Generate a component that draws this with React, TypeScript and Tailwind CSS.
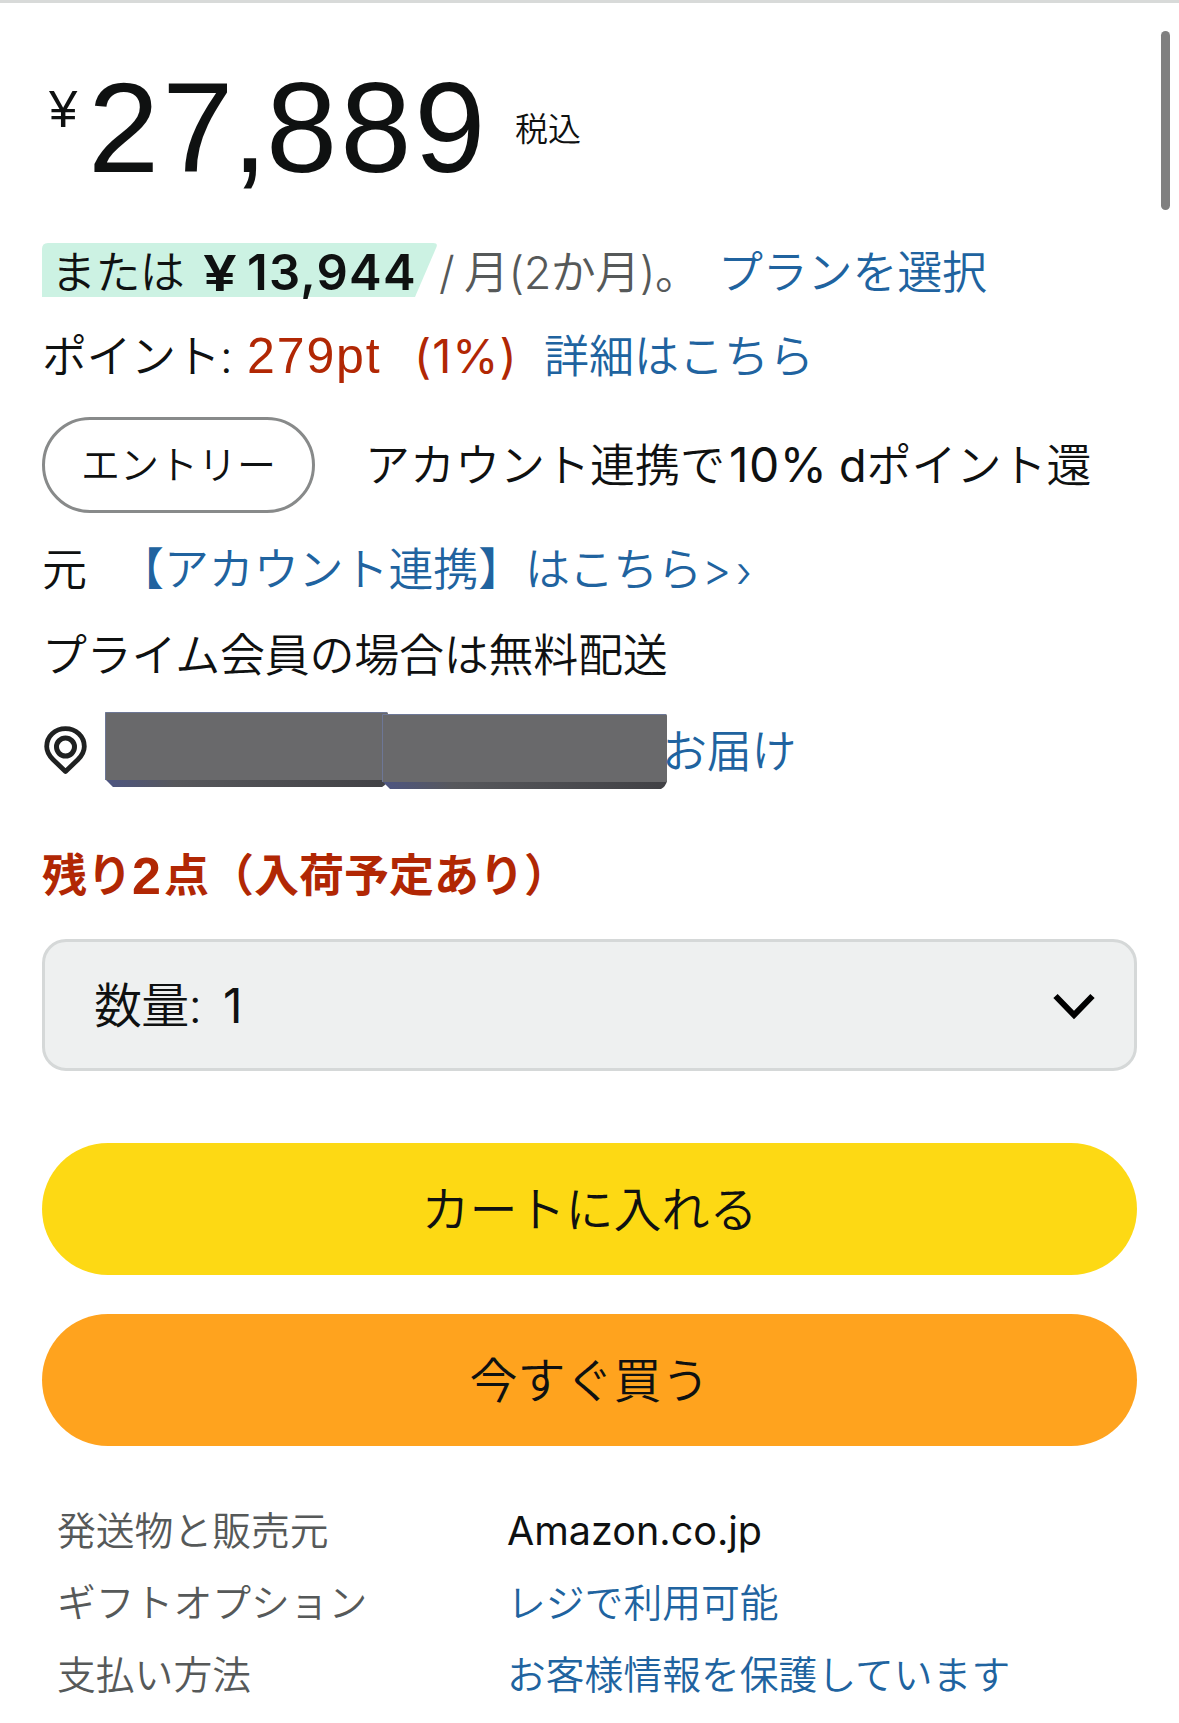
import type { ReactNode } from "react";

const link = "text-[#20639f]";

function Line({ className, children }: { className: string; children: ReactNode }) {
  return <div className={`flex items-center whitespace-nowrap ${className}`}>{children}</div>;
}

function PinIcon() {
  return (
    <svg className="block h-[49px] w-[43px]" viewBox="0 0 43 49" fill="none" stroke="#1f2121">
      <path d="M21.500 45.500 L9 33.500 C4.500 29 2.700 25 2.700 20.500 C2.700 10.500 11 2.700 21.500 2.700 C32 2.700 40.300 10.500 40.300 20.500 C40.300 25 38.500 29 34 33.500 Z" strokeWidth="4.800" strokeLinejoin="round" />
      <circle cx="21.500" cy="21" r="9" strokeWidth="5" />
    </svg>
  );
}

function RedactionBlock({ id, className }: { id: string; className: string }) {
  return (
    <svg className={className} viewBox="0 0 285 75" preserveAspectRatio="none">
      <defs>
        <linearGradient id={id} x1="0" x2="1" y1="0" y2="0">
          <stop offset="0" stopColor="#4d5582" />
          <stop offset="0.25" stopColor="#57585c" />
          <stop offset="1" stopColor="#414145" />
        </linearGradient>
      </defs>
      <path d="M0 67 H285 Q284 72 279 75 H8 Z" fill={`url(#${id})`} />
      <rect width="285" height="68" rx="1.500" fill="#69696b" />
      <path d="M0.500 68 V0.500 H284" fill="none" stroke="#6d7796" />
    </svg>
  );
}

const details = [
  { label: "発送物と販売元", value: "Amazon.co.jp", valueClass: "mt-[2px] font-normal text-[#0f1111] text-[39.500px]" },
  { label: "ギフトオプション", value: "レジで利用可能", valueClass: "text-[#20639f]" },
  { label: "支払い方法", value: "お客様情報を保護しています", valueClass: "text-[#20639f]" },
];

export default function App() {
  return (
    <main
      lang="ja"
      className="relative h-[1723px] w-[1179px] overflow-hidden border-t-[3px] border-[#d8dad9] bg-white pr-[42px] pl-[42px] font-['Inter','Noto_Sans_CJK_JP',sans-serif] text-[45px] font-[350] text-[#0f1111]"
    >
      <div className="absolute top-[28px] right-[9px] h-[179px] w-[9px] rounded-full bg-[#808080]" />

      <div className="flex h-[240px] items-start whitespace-nowrap">
        <span className="mt-[76px] ml-[7px] w-[39px] font-['Liberation_Sans'] text-[51px] leading-[62px]">¥</span>
        <span className="mt-[48px] w-[427px] font-['Liberation_Sans'] text-[128px] leading-[154px] tracking-[3px]">
          <span className="tracking-[-1.500px]">
            <span className="tracking-[3px]">2</span>7,
          </span>
          889
        </span>
        <span className="mt-[101px] text-[33px] leading-[50px]">税込</span>
      </div>

      <Line className="h-[54px]">
        <div className="relative flex h-[54px] w-[395px] items-center">
          <svg className="absolute inset-0 h-[54px] w-[395px]" viewBox="0 0 395 54">
            <path d="M6 0 H391 Q396 0 394.500 4 L373 54 H0 V6 Q0 0 6 0 Z" fill="#ccf2e3" />
          </svg>
          <span className="relative mt-[6px] ml-[9px] w-[152px] tracking-[-0.600px]">または</span>
          <span className="relative mt-[6px] w-[44px] origin-left scale-x-120 text-[50px] font-semibold">¥</span>
          <span className="relative mt-[6px] text-[49px] font-semibold tracking-[1.200px]">13,944</span>
        </div>
        <span className="mt-[5px] ml-[2px] w-[25px] text-[#565959]">/</span>
        <span className="mt-[5px] w-[254px] tracking-[-0.500px] text-[#565959]">月(2か月)。</span>
        <a className={`mt-[5px] tracking-[-0.200px] ${link}`}>プランを選択</a>
      </Line>

      <Line className="mt-[30px] h-[60px]">
        <span className="w-[205px] tracking-[-0.500px]">ポイント:</span>
        <span className="-mt-[2px] w-[167px] font-['Liberation_Sans'] text-[50px] tracking-[1.900px] text-[#b12704]">279pt</span>
        <span className="-mt-[2px] w-[130px] text-[47px] font-normal tracking-[1px] text-[#b12704]">(1%)</span>
        <a className={link}>詳細はこちら</a>
      </Line>

      <Line className="mt-[30px] h-[96px]">
        <button className="h-[96px] w-[273px] rounded-full border-[3px] border-[#888a8a] text-[39px]">エントリー</button>
        <span className="mt-[2px] ml-[50px] w-[364px]">アカウント連携で</span>
        <span className="-mt-[1px] w-[110px] text-[48px] font-normal tracking-[0.500px]">10%</span>
        <span className="mt-[2px]">
          <span className="font-normal">d</span>ポイント還
        </span>
      </Line>

      <Line className="mt-[27px] h-[60px]">
        <span className="w-[77px]">元</span>
        <a className={`flex items-center ${link}`}>
          <span className="w-[406px] tracking-[-0.100px]">【アカウント連携】</span>
          <span className="w-[177px] tracking-[-0.900px]">はこちら</span>
          <span className="w-[34px]">&gt;</span>
          <span className="mt-[2px] text-[43px]">›</span>
        </a>
      </Line>

      <Line className="mt-[26px] h-[60px]">
        <span className="tracking-[-0.250px]">プライム会員の場合は無料配送</span>
      </Line>

      <Line className="mt-[26px] h-[78px]">
        <div className="-mt-[2px] ml-[2px] w-[61px]">
          <PinIcon />
        </div>
        <div className="flex h-[78px] w-[562px] items-start">
          <RedactionBlock id="edge-left" className="h-[75px] w-[283px] shrink-0" />
          <RedactionBlock id="edge-right" className="mt-[2px] -ml-[6px] h-[75px] w-[285px] shrink-0" />
        </div>
        <a className={`mt-[2px] -ml-[5px] tracking-[-0.300px] ${link}`}>お届け</a>
      </Line>

      <Line className="mt-[56px] h-[60px] font-bold text-[#b12704]">
        <span className="w-[90px]">残り</span>
        <span className="w-[32px] font-['Liberation_Sans'] text-[52px]">2</span>
        <span>点（入荷予定あり）</span>
      </Line>

      <button className="mt-[33px] flex h-[132px] w-[1095px] items-center rounded-[24px] border-[3px] border-[#d5d8d8] bg-[#eef0f0] pt-[2px] pr-[39px] pl-[49px] text-[48px]">
        <span className="w-[129px] text-left tracking-[-0.700px]">数量:</span>
        <span className="font-normal">1</span>
        <svg className="mt-[2px] ml-auto h-[28px] w-[42px]" viewBox="0 0 42 28" fill="none" stroke="#000" strokeWidth="6">
          <path d="M2.500 3 L21 22 L39.500 3" />
        </svg>
      </button>

      <button className="mt-[72px] block h-[132px] w-[1095px] rounded-full bg-[#fdd914] pt-[2px] text-[48px]">カートに入れる</button>
      <button className="mt-[39px] block h-[132px] w-[1095px] rounded-full bg-[#ffa31e] pt-[2px] text-[48px]">今すぐ買う</button>

      <dl className="mt-[49px] ml-[15px] text-[38.800px]">
        {details.map((row) => (
          <div key={row.label} className="flex h-[72px] items-center whitespace-nowrap">
            <dt className="w-[450px] text-[#565959]">{row.label}</dt>
            <dd className={row.valueClass}>{row.value}</dd>
          </div>
        ))}
      </dl>
    </main>
  );
}
